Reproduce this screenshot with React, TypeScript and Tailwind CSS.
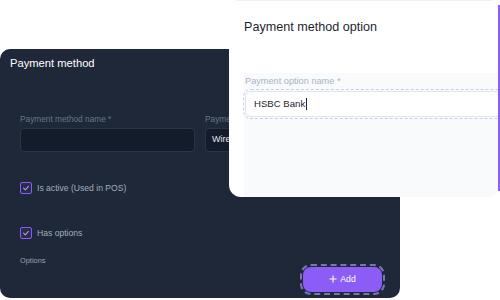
import React from "react";

function Check() {
  return (
    <span className="flex h-[12px] w-[12px] items-center justify-center rounded-[2px] border-[1.5px] border-[#8b5cf6] bg-[#2a2a4a]">
      <svg width="8" height="8" viewBox="0 0 10 10" fill="none">
        <path d="M2 5.2 L4.2 7.3 L8 3" stroke="#a89cf0" strokeWidth="1.4" strokeLinecap="round" strokeLinejoin="round" />
      </svg>
    </span>
  );
}

export default function App() {
  return (
    <div
      className="relative h-[300px] w-[500px] overflow-hidden bg-white"
      style={{ fontFamily: '"Liberation Sans", Arial, sans-serif' }}
    >
      {/* Dark panel */}
      <div className="mt-[49px] flex h-[249px] w-[400px] flex-col rounded-[10px] bg-[#1f2839] px-[20px]">
        <div className="-ml-[10px] mt-[7px] text-[11.2px] leading-[14px] text-white">Payment method</div>
        <div className="mt-[44px] grid grid-cols-[175px_175px] gap-x-[10px]">
          <div className="flex flex-col">
            <span className="text-[8.3px] leading-[10px] text-[#66758c]">Payment method name *</span>
            <div className="mt-[4px] h-[24px] rounded-[4px] border border-[#2a3446] bg-[#141c2b]" />
          </div>
          <div className="flex flex-col">
            <span className="text-[8.3px] leading-[10px] text-[#66758c]">Payment method type</span>
            <div className="mt-[4px] flex h-[24px] items-center rounded-[4px] border border-[#2a3446] bg-[#141c2b] pl-[6px] text-[9px] text-[#e5e7eb]">
              Wire transfer
            </div>
          </div>
        </div>
        <div className="mt-[30px] flex items-center gap-[5px]">
          <Check />
          <span className="text-[8.6px] text-[#a3adbd]">Is active (Used in POS)</span>
        </div>
        <div className="mt-[32px] flex items-center gap-[5px]">
          <Check />
          <span className="text-[8.6px] text-[#a3adbd]">Has options</span>
        </div>
        <div className="mt-[16px] text-[7.4px] leading-[9px] text-[#98a2b3]">Options</div>
        <div className="mt-[2px] flex justify-end">
          <button className="mr-[-2px] flex h-[25px] w-[79px] items-center justify-center gap-[3px] rounded-[8px] bg-[#8b5cf6] text-[8.7px] text-white outline-2 outline-offset-1 outline-dashed outline-[#7d74b8]">
            <svg width="8" height="8" viewBox="0 0 8 8">
              <path d="M4 0.5 V7.5 M0.5 4 H7.5" stroke="white" strokeWidth="1.1" />
            </svg>
            Add
          </button>
        </div>
      </div>

      {/* White dialog overlay */}
      <div className="absolute left-[229px] top-0 flex h-[197px] w-[271px] flex-col rounded-bl-[12px] rounded-br-[12px] bg-white">
        <div className="mx-[7px] h-px bg-[#eef1f6]" />
        <div className="ml-[15px] mt-[19px] text-[12.6px] leading-[15px] text-[#1f2430]">Payment method option</div>
        <div className="ml-[15px] mr-[2px] mt-[38px] flex flex-1 flex-col rounded-br-[10px] bg-[#f8fafc]">
          <span className="ml-[1px] mt-[3px] text-[9.2px] leading-[11px] text-[#a9b4c4]">Payment option name *</span>
          <div className="ml-[1px] mr-[-20px] mt-[4px] flex h-[26px] items-center rounded-[6px] border border-[#dfe5ee] bg-white pl-[8px] text-[9.6px] text-[#1f2430] outline-1 outline-offset-1 outline-dashed outline-[#c3d1e6]">
            HSBC Bank
            <span className="ml-[1px] inline-block h-[12px] w-px bg-[#1f2430]" />
          </div>
        </div>
        <div className="absolute right-0 top-[5px] h-[186px] w-[2px] bg-[#8b5cf6]" />
      </div>
    </div>
  );
}
